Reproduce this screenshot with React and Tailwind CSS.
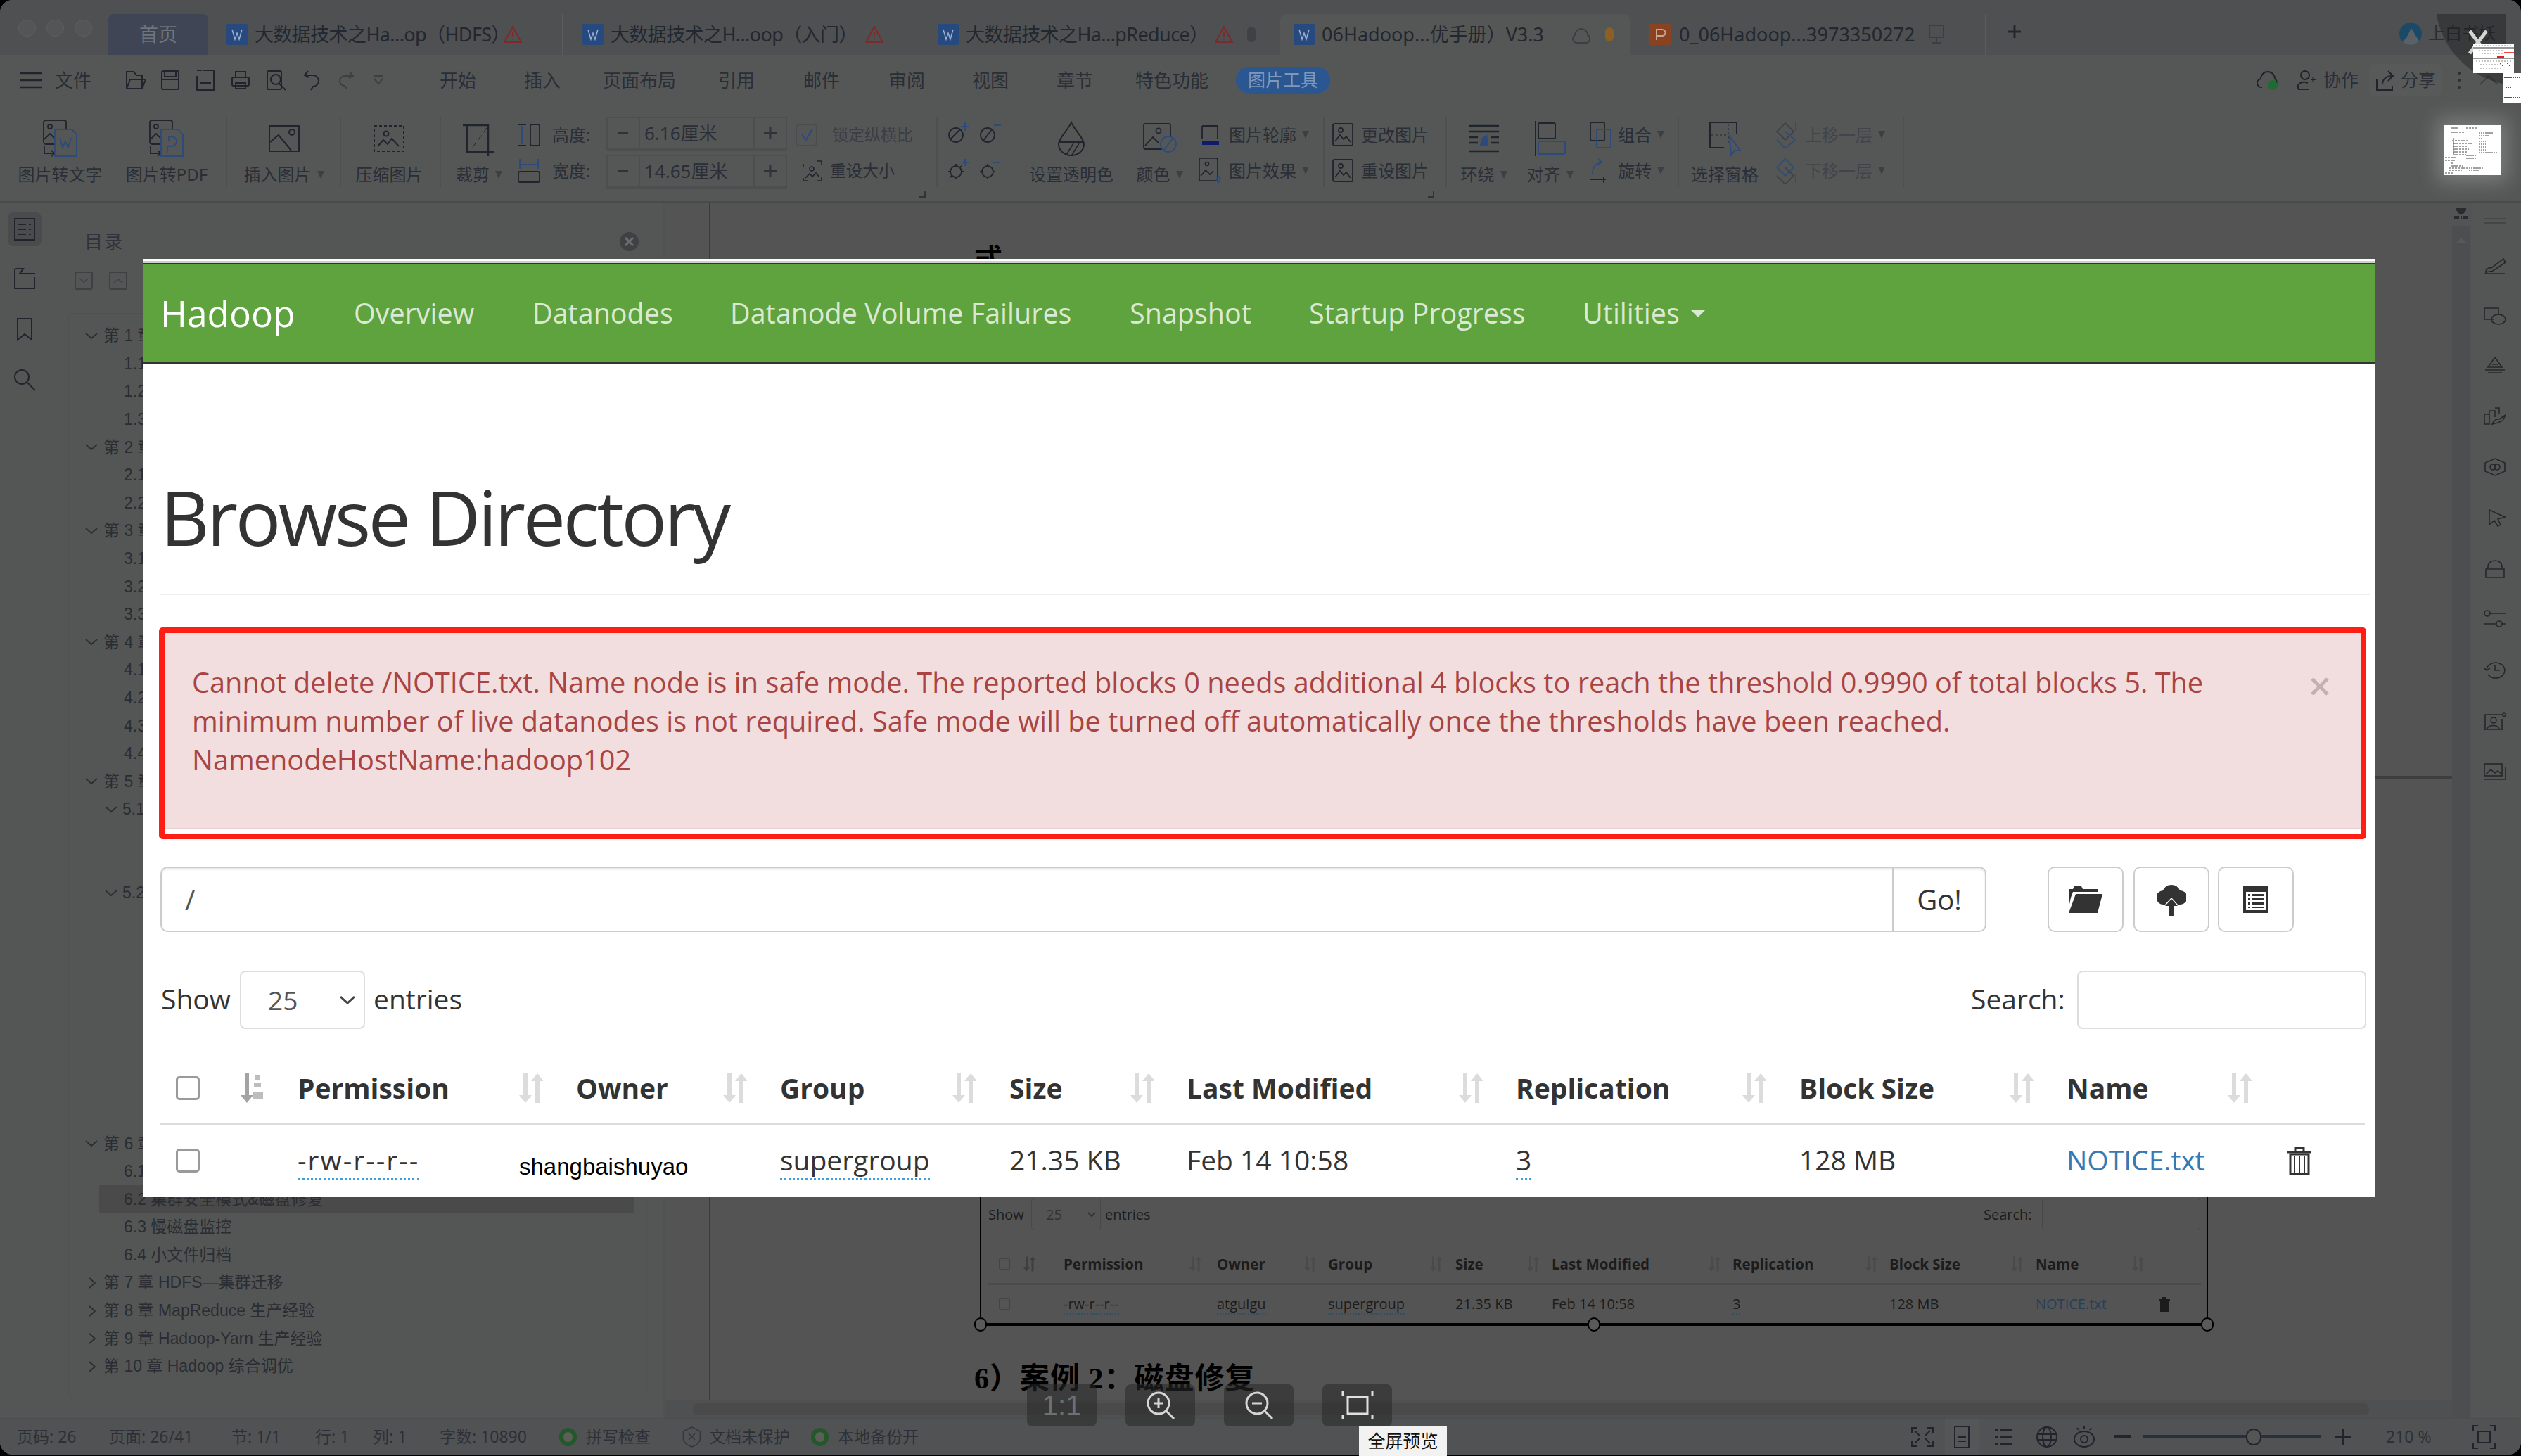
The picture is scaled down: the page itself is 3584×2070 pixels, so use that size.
import React from "react";

const D = "#20242d";
const B = "#2c4a7c";
const Svg = ({ w, h, children, sw = 2, c = D, className = "" }) => (
  <svg width={w} height={h} viewBox={`0 0 ${w} ${h}`} fill="none" stroke={c} strokeWidth={sw} className={`shrink-0 ${className}`}>
    {children}
  </svg>
);
const Arrow = () => <span className="inline-block ml-[8px] w-0 h-0 border-x-[5px] border-x-transparent border-t-[11px] border-t-[#3b3f46]" />;

const Warn = () => (
  <Svg w={26} h={26} c="#7c2b2b">
    <path d="M13 2 L25 24 H1 Z" />
    <path d="M13 9v8M13 19v2" />
  </Svg>
);
const DocIcon = ({ color = "#264a80", letter = "W" }) => (
  <div className="w-[30px] h-[30px] flex items-center justify-center shrink-0 rounded-[2px]" style={{ background: color }}>
    {letter === "W" ? (
      <Svg w={20} h={20} c="#9fb2cc" sw={1.5}><path d="M3 3l4 14 3-9 3 9 4-14" /></Svg>
    ) : (
      <Svg w={20} h={20} c="#c9a793" sw={2}><path d="M5 18V3h8a4 4 0 010 9H5" /></Svg>
    )}
  </div>
);

function Tabs() {
  return (
    <div className="h-[78px] bg-[#4e5052] flex items-end text-[27px] text-[#23272f] shrink-0">
      <div className="flex gap-[15px] ml-[26px] mb-[26px]">
        <i className="w-[25px] h-[24px] rounded-full border border-[#5d5f60] bg-[#535556]" />
        <i className="w-[25px] h-[24px] rounded-full border border-[#5d5f60] bg-[#535556]" />
        <i className="w-[25px] h-[24px] rounded-full border border-[#5d5f60] bg-[#535556]" />
      </div>
      <div className="ml-[23px] w-[142px] h-[58px] bg-[#3f4554] rounded-t-[8px] flex items-center justify-center text-[#71757c]">首页</div>
      <div className="ml-[26px] h-[58px] flex items-center w-[478px] border-r border-[#5a5c5e]">
        <DocIcon /><span className="ml-[10px] w-[354px] whitespace-nowrap tracking-[-0.6px]">大数据技术之Ha...op（HDFS）</span><Warn />
      </div>
      <div className="ml-[28px] h-[58px] flex items-center w-[479px] border-r border-[#5a5c5e]">
        <DocIcon /><span className="ml-[10px] w-[362px] whitespace-nowrap tracking-[-0.6px]">大数据技术之H...oop（入门）</span><Warn />
      </div>
      <div className="ml-[26px] h-[58px] flex items-center w-[487px]">
        <DocIcon /><span className="ml-[10px] w-[354px] whitespace-nowrap tracking-[-0.6px]">大数据技术之Ha...pReduce）</span><Warn />
        <i className="ml-[20px] w-[12px] h-[22px] rounded-full bg-[#3f4145]" />
      </div>
      <div className="h-[58px] w-[497px] bg-[#555756] rounded-t-[8px] flex items-center pl-[19px]">
        <DocIcon /><span className="ml-[10px] w-[355px] whitespace-nowrap">06Hadoop...优手册）V3.3</span>
        <Svg w={28} h={32} c="#3b3e44"><path d="M7 28a6 6 0 01-2-11 9 9 0 0118 0 6 6 0 01-1 11z" /></Svg>
        <i className="ml-[20px] w-[12px] h-[20px] rounded-full bg-[#8c5f22]" />
      </div>
      <div className="ml-[28px] h-[58px] flex items-center w-[478px] border-r border-[#5a5c5e]">
        <DocIcon color="#8a4320" letter="P" /><span className="ml-[12px] w-[354px] whitespace-nowrap">0_06Hadoop...3973350272</span>
        <Svg w={24} h={30} c="#3b3e44"><rect x="2" y="2" width="20" height="17" /><path d="M12 19v7M6 27h12" /></Svg>
      </div>
      <div className="ml-[30px] mb-[22px]"><Svg w={22} h={22} c="#25282e" sw={3}><path d="M11 2v18M2 11h18" /></Svg></div>
      <div className="ml-[536px] mb-[14px] w-[32px] h-[32px] rounded-full overflow-hidden">
        <svg width="32" height="32" viewBox="0 0 32 32"><rect width="32" height="32" fill="#1a4a68" /><path d="M0 32L10 22 17 8 24 20 32 32z" fill="#5b5f66" /></svg>
      </div>
      <span className="ml-[9px] mb-[13px] whitespace-nowrap text-[24px] text-[#2b2e33]">上白书妖</span>
    </div>
  );
}

function Menu() {
  return (
    <div className="h-[72px] flex items-center text-[26px] text-[#2a2e37] bg-[#555756] shrink-0 relative">
      <Svg w={30} h={26} className="ml-[29px]" sw={2.5}><path d="M0 3h30M0 13h30M0 23h30" /></Svg>
      <span className="ml-[19px] w-[52px]">文件</span>
      <Svg w={30} h={30} className="ml-[48px]"><path d="M2 27V3h10l4 5h8v19zM2 27l5-13h22l-5 13" /></Svg>
      <Svg w={28} h={30} className="ml-[20px]"><rect x="2" y="2" width="24" height="26" rx="2" /><path d="M6 2v8h16V2M2 14h24" /></Svg>
      <Svg w={28} h={32} className="ml-[22px]"><path d="M10 2h16v28H2V10" /><path d="M2 2h7M6 20h16" /></Svg>
      <Svg w={28} h={28} className="ml-[22px]"><rect x="2" y="10" width="24" height="12" rx="2" /><rect x="7" y="2" width="14" height="8" /><rect x="7" y="18" width="14" height="8" /></Svg>
      <Svg w={30} h={30} className="ml-[22px]"><rect x="2" y="2" width="20" height="26" rx="2" /><circle cx="14" cy="14" r="7" /><path d="M19 20l9 9" /></Svg>
      <Svg w={26} h={32} className="ml-[22px]"><path d="M8 3L3 9l6 3M3 9h12a8 8 0 010 16l-3 5" /></Svg>
      <Svg w={24} h={30} c="#3c3f44" className="ml-[24px]"><path d="M17 3l5 6-6 3M22 9H10a7 7 0 000 14l3 4" /></Svg>
      <Svg w={16} h={14} c="#3c3f44" className="ml-[26px]"><path d="M2 1h12M2 5l6 7 6-7" /></Svg>
      <span className="ml-[79px] w-[52px]">开始</span>
      <span className="ml-[68px] w-[52px]">插入</span>
      <span className="ml-[60px] w-[104px]">页面布局</span>
      <span className="ml-[60px] w-[52px]">引用</span>
      <span className="ml-[69px] w-[52px]">邮件</span>
      <span className="ml-[69px] w-[52px]">审阅</span>
      <span className="ml-[67px] w-[52px]">视图</span>
      <span className="ml-[68px] w-[52px]">章节</span>
      <span className="ml-[60px] w-[104px]">特色功能</span>
      <span className="ml-[39px] w-[134px] h-[38px] rounded-[19px] bg-[#2a5792] text-[#7f98ba] flex items-center justify-center text-[25px]">图片工具</span>
      <Svg w={32} h={28} className="ml-[1317px]"><path d="M8 24a6 6 0 01-2-12 10 10 0 0120 0 6 6 0 010 10" /><circle cx="23" cy="21" r="7" fill="#1f6b33" stroke="none" /></Svg>
      <Svg w={28} h={30} className="ml-[24px]"><circle cx="13" cy="8" r="6" /><path d="M3 28V22a10 8 0 0114-3M3 28h16M21 14h7M24.500 10v8" /></Svg>
      <span className="ml-[11px] text-[25px]">协作</span>
      <div className="ml-[15px] w-[103px] h-[46px] rounded-[8px] bg-[#585a5a] flex items-center pl-[9px] text-[25px]">
        <Svg w={26} h={32}><path d="M2 14v16h22V24M10 22c0-8 6-12 14-12M18 3l7 7-7 7" /></Svg>
        <span className="ml-[10px]">分享</span>
      </div>
      <div className="ml-[23px] flex flex-col gap-[6px]"><i className="w-[4px] h-[4px] rounded-full bg-[#2a2d33]" /><i className="w-[4px] h-[4px] rounded-full bg-[#2a2d33]" /><i className="w-[4px] h-[4px] rounded-full bg-[#2a2d33]" /></div>
    </div>
  );
}

const Sep = ({ cls }) => <i className={`block w-[2px] h-[100px] bg-[#4d4f50] self-start shrink-0 ${cls}`} />;
const Large = ({ cls, label, arrow, children }) => (
  <div className={`flex flex-col items-center shrink-0 ${cls}`}>
    <div className="h-[62px] flex items-center justify-center">{children}</div>
    <div className="h-[40px] flex items-center whitespace-nowrap">{label}{arrow && <Arrow />}</div>
  </div>
);
const SmallRow = ({ children, cls = "" }) => <div className={`h-[51px] flex items-center whitespace-nowrap ${cls}`}>{children}</div>;
const SmallPic = () => (
  <Svg w={32} h={34} sw={1.8}><rect x="1" y="1" width="28" height="31" rx="2" /><circle cx="12" cy="10" r="3" /><path d="M4 26l7-9 5 6 4-4 6 8" /></Svg>
);
const Spin = ({ text }) => (
  <div className="h-[48px] w-[257px] border-2 border-b-4 border-[#4c4e50] flex items-center text-[26px]">
    <div className="w-[46px] h-full border-r-2 border-[#4c4e50] flex items-center justify-center"><i className="w-[14px] h-[4px] bg-[#2f3238]" /></div>
    <span className="flex-1 pl-[6px]">{text}</span>
    <div className="w-[46px] h-full border-l-2 border-[#4c4e50] flex items-center justify-center"><Svg w={18} h={18} c="#2f3238" sw={3}><path d="M9 0v18M0 9h18" /></Svg></div>
  </div>
);

function Ribbon() {
  return (
    <div className="h-[138px] border-b-2 border-[#484a4b] bg-[#555756] flex items-start pt-[16px] text-[24px] text-[#2a2e37] shrink-0 relative">
      <Large cls="ml-[26px] w-[119px]" label="图片转文字">
        <Svg w={50} h={54} sw={1.8}><rect x="1" y="1" width="32" height="34" rx="3" /><circle cx="10" cy="10" r="3" /><path d="M2 28l8-8 6 6" /><path d="M2 38v10h14M12 44l5 4-5 4" /><path d="M17 14h24l7 7v31H17z" fill="#555756" stroke={B} /><path d="M24 26l4 14 4-9 4 9 4-14" stroke={B} /></Svg>
      </Large>
      <Large cls="ml-[34px] w-[116px]" label="图片转PDF">
        <Svg w={50} h={54} sw={1.8}><rect x="1" y="1" width="32" height="34" rx="3" /><circle cx="10" cy="10" r="3" /><path d="M2 28l8-8 6 6" /><path d="M2 38v10h14M12 44l5 4-5 4" /><path d="M17 14h24l7 7v31H17z" fill="#555756" stroke={B} /><path d="M26 48V38h6a6 6 0 000-14h-4v6" stroke={B} /></Svg>
      </Large>
      <Sep cls="ml-[26px]" />
      <Large cls="ml-[22px] w-[117px]" label="插入图片" arrow>
        <Svg w={44} h={38} sw={2}><rect x="1" y="1" width="42" height="36" /><circle cx="33" cy="10" r="4" /><path d="M2 24l12-10 18 22" /></Svg>
      </Large>
      <Sep cls="ml-[21px]" />
      <Large cls="ml-[22px] w-[93px]" label="压缩图片">
        <Svg w={48} h={42} sw={2}><rect x="2" y="3" width="42" height="36" strokeDasharray="4 3" /><circle cx="19" cy="14" r="3.500" /><path d="M7 32l8-9 6 6 6-8 10 11" /></Svg>
      </Large>
      <Sep cls="ml-[25px]" />
      <Large cls="ml-[19px] w-[70px]" label="裁剪" arrow>
        <Svg w={50} h={50} sw={2.5}><path d="M2 6h36v38M8 6v38h38M38 50V44" /><path d="M36 10L14 40" strokeDasharray="8 5" strokeWidth="1" /></Svg>
      </Large>
      <div className="ml-[20px] w-[107px] shrink-0">
        <SmallRow>
          <Svg w={32} h={34} sw={1.8}><path d="M0 2h12M0 32h12" /><path d="M6 4v26" stroke={B} /><rect x="18" y="2" width="13" height="30" rx="2" /></Svg>
          <span className="ml-[17px]">高度:</span>
        </SmallRow>
        <SmallRow>
          <Svg w={32} h={34} sw={1.8}><path d="M3 0v14M29 0v14M4 8h24" stroke={B} /><rect x="1" y="18" width="30" height="15" rx="2" /></Svg>
          <span className="ml-[17px]">宽度:</span>
        </SmallRow>
      </div>
      <div className="ml-[19px] shrink-0 flex flex-col gap-[6px]"><Spin text="6.16厘米" /><Spin text="14.65厘米" /></div>
      <div className="ml-[12px] w-[198px] shrink-0">
        <SmallRow>
          <div className="w-[31px] h-[32px] rounded-[5px] border-2 border-[#4a4d4f] flex items-center justify-center"><Svg w={20} h={20} c={B}><path d="M3 9l6 8 9-16" /></Svg></div>
          <span className="ml-[21px] text-[23px] text-[#3a3d44]">锁定纵横比</span>
        </SmallRow>
        <SmallRow cls="pl-[9px]">
          <Svg w={30} h={32} sw={1.6}><path d="M2 6v4M22 2h6v6M2 26v4h6M28 24v6h-6" /><circle cx="14" cy="13" r="3" /><path d="M5 26l6-6 4 4 5-5 5 6" /></Svg>
          <span className="ml-[10px] text-[23px]">重设大小</span>
        </SmallRow>
      </div>
      <Sep cls="ml-[2px]" />
      <div className="ml-[14px] w-[90px] h-[102px] shrink-0 grid grid-cols-2 content-start gap-y-[20px] pt-[6px]">
        <Svg w={34} h={32} sw={1.8}><circle cx="12" cy="20" r="10" /><path d="M4 26L18 12" /><path d="M25 2v12M19 8h12" stroke={B} /></Svg>
        <Svg w={34} h={32} sw={1.8}><circle cx="12" cy="20" r="10" /><path d="M6 28L18 12" /><path d="M21 6h10" stroke={B} /></Svg>
        <Svg w={34} h={32} sw={1.8}><circle cx="12" cy="20" r="8" /><path d="M1 20h2M21 20h2M12 9v2M12 29v2M4 28l2-2M18 14l2-2" /><path d="M25 2v10M20 7h10" stroke={B} /></Svg>
        <Svg w={34} h={32} sw={1.8}><circle cx="12" cy="20" r="8" /><path d="M1 20h2M21 20h2M12 9v2M12 29v2" /><path d="M20 7h10" stroke={B} /></Svg>
      </div>
      <Large cls="ml-[27px] w-[118px]" label="设置透明色">
        <Svg w={42} h={50} sw={2}><path d="M21 2C17 12 3 24 3 33a18 16 0 0036 0C39 24 25 12 21 2z" /><path d="M3 30h36" /><path d="M14 48l10-16M22 48l10-16" strokeWidth="1.500" /></Svg>
      </Large>
      <Large cls="ml-[33px] w-[67px]" label="颜色" arrow>
        <Svg w={48} h={44} sw={1.8}><rect x="1" y="1" width="38" height="36" rx="2" /><circle cx="22" cy="11" r="3.500" /><path d="M3 32l11-12 8 8" /><circle cx="36" cy="30" r="11" fill="#555756" stroke={B} /><path d="M30 38l12-16" stroke={B} /></Svg>
      </Large>
      <div className="ml-[22px] w-[167px] shrink-0">
        <SmallRow>
          <Svg w={32} h={30} sw={1.8} className="ml-[1px]"><path d="M4 2h22v18M4 2v18" /><rect x="4" y="23" width="24" height="6" fill="#101a6e" stroke="none" /></Svg>
          <span className="ml-[10px]">图片轮廓</span><Arrow />
        </SmallRow>
        <SmallRow>
          <Svg w={34} h={38} sw={1.6}><rect x="1" y="1" width="26" height="32" rx="2" /><circle cx="12" cy="9" r="2.500" /><path d="M3 26l7-8 6 6 5-5" /><path d="M28 26l3 5-3 5-3-5z" stroke={B} /></Svg>
          <span className="ml-[9px]">图片效果</span><Arrow />
        </SmallRow>
      </div>
      <Sep cls="ml-[10px]" />
      <div className="ml-[11px] w-[134px] shrink-0">
        <SmallRow><SmallPic /><span className="ml-[9px]">更改图片</span></SmallRow>
        <SmallRow><SmallPic /><span className="ml-[9px]">重设图片</span></SmallRow>
      </div>
      <Sep cls="ml-[27px]" />
      <Large cls="ml-[19px] w-[67px]" label="环绕" arrow>
        <Svg w={44} h={40} sw={2.5}><path d="M1 2h42M1 10h42M1 18h12M31 18h12M1 26h12M31 26h12M1 38h42" /><path d="M16 30l2-10 8-6 2 16z" fill={B} stroke="none" /></Svg>
      </Large>
      <Large cls="ml-[27px] w-[67px]" label="对齐" arrow>
        <Svg w={44} h={50} sw={2}><path d="M1 0v50" /><rect x="5" y="3" width="24" height="22" rx="2" /><rect x="5" y="29" width="38" height="18" rx="2" stroke={B} /></Svg>
      </Large>
      <div className="ml-[23px] w-[115px] shrink-0">
        <SmallRow>
          <Svg w={32} h={38} sw={1.8}><rect x="1" y="1" width="20" height="26" rx="2" /><rect x="10" y="11" width="20" height="26" rx="2" stroke={B} /></Svg>
          <span className="ml-[8px]">组合</span><Arrow />
        </SmallRow>
        <SmallRow>
          <Svg w={32} h={36} sw={1.8}><path d="M4 22C4 12 8 8 16 6M12 1l5 5-6 3" stroke={B} /><path d="M1 30h22M20 26v9" /></Svg>
          <span className="ml-[8px]">旋转</span><Arrow />
        </SmallRow>
      </div>
      <Sep cls="ml-[10px]" />
      <Large cls="ml-[17px] w-[96px]" label="选择窗格">
        <Svg w={46} h={50} sw={2}><path d="M22 38H2V2h38v16" /><path d="M28 4v30M4 20h22" strokeWidth="1" strokeDasharray="3 3" /><path d="M30 22l15 20-8 0-5 7z" stroke={B} /></Svg>
      </Large>
      <div className="ml-[24px] w-[168px] shrink-0 text-[#41444a]">
        <SmallRow>
          <Svg w={34} h={38} c="#3f4247" sw={1.8}><path d="M14 2L26 14 14 26 2 14z" /><path d="M14 14l14 12-14 12L2 26" stroke="#324c72" /><path d="M29 1v12" stroke="#324c72" /></Svg>
          <span className="ml-[8px]">上移一层</span><Arrow />
        </SmallRow>
        <SmallRow>
          <Svg w={34} h={38} c="#3f4247" sw={1.8}><path d="M14 2L26 14 14 26 2 14z" stroke="#324c72" /><path d="M14 14l12 12-12 12L2 26" /><path d="M29 24v12" stroke="#324c72" /></Svg>
          <span className="ml-[8px]">下移一层</span><Arrow />
        </SmallRow>
      </div>
      <Sep cls="ml-[13px]" />
      <i className="absolute left-[1307px] top-[122px] w-[9px] h-[9px] border-r-2 border-b-2 border-[#303338]" />
      <i className="absolute left-[2030px] top-[122px] w-[9px] h-[9px] border-r-2 border-b-2 border-[#303338]" />
    </div>
  );
}

const tocRows = [
  ["c", "第 1 章"], ["s", "1.1"], ["s", "1.2"], ["s", "1.3"],
  ["c", "第 2 章"], ["s", "2.1"], ["s", "2.2"],
  ["c", "第 3 章"], ["s", "3.1"], ["s", "3.2"], ["s", "3.3"],
  ["c", "第 4 章"], ["s", "4.1"], ["s", "4.2"], ["s", "4.3"], ["s", "4.4"],
  ["c", "第 5 章"], ["o", "5.1"], ["b", ""], ["b", ""], ["o", "5.2"],
  ["b", ""], ["b", ""], ["b", ""], ["b", ""], ["b", ""], ["b", ""], ["b", ""], ["b", ""],
  ["c", "第 6 章"], ["s", "6.1"], ["a", "6.2 集群安全模式&磁盘修复"], ["s", "6.3 慢磁盘监控"], ["s", "6.4 小文件归档"],
  ["r", "第 7 章 HDFS—集群迁移"], ["r", "第 8 章 MapReduce 生产经验"], ["r", "第 9 章 Hadoop-Yarn 生产经验"], ["r", "第 10 章 Hadoop 综合调优"],
];
const Chev = ({ right }) => (
  <Svg w={18} h={18} sw={1.8} c="#2a2d33">{right ? <path d="M6 2l8 7-8 7" /> : <path d="M1 5l8 7 8-7" />}</Svg>
);
function Toc() {
  return (
    <div className="w-[875px] shrink-0 border-r-2 border-[#505253] bg-[#545655] flex flex-col text-[#2a2d33]">
      <div className="mt-[38px] h-[34px] flex items-center justify-between pl-[50px] pr-[35px]">
        <span className="text-[26px] tracking-[2px] text-[#2f333c]">目录</span>
        <div className="w-[27px] h-[27px] rounded-full bg-[#3f4144] flex items-center justify-center"><Svg w={13} h={13} c="#6c6e70" sw={3}><path d="M1 1l11 11M12 1L1 12" /></Svg></div>
      </div>
      <div className="mt-[26px] ml-[36px] flex gap-[23px]">
        <div className="w-[26px] h-[26px] border-2 border-[#3e4043] rounded-[3px] flex items-center justify-center"><Svg w={14} h={10} c="#3e4043" sw={1.5}><path d="M1 2l6 5 6-5" /></Svg></div>
        <div className="w-[26px] h-[26px] border-2 border-[#3e4043] rounded-[3px] flex items-center justify-center"><Svg w={14} h={10} c="#3e4043" sw={1.5}><path d="M1 8l6-5 6 5" /></Svg></div>
      </div>
      <div className="mt-[33px] ml-[27px] w-[823px] h-[1543px] border border-[#4f5153] rounded-[8px] pt-[12px] text-[23px] leading-none overflow-hidden font-['Liberation_Sans','Noto_Sans_CJK_SC',sans-serif]">
        {tocRows.map(([k, t], i) => (
          <div key={i} className="h-[39.6px] flex items-center whitespace-nowrap">
            {(k === "c" || k === "r") && <div className="pl-[23px] flex items-center">{k === "r" ? <Chev right /> : <Chev />}<span className="ml-[8px]">{t}</span></div>}
            {k === "s" && <span className="pl-[78px]">{t}</span>}
            {k === "o" && <div className="pl-[51px] flex items-center"><Chev /><span className="ml-[7px]">{t}</span></div>}
            {k === "a" && <div className="ml-[43px] w-[761px] h-[40px] bg-[#4a4a4a] flex items-center pl-[35px]">{t}</div>}
          </div>
        ))}
      </div>
    </div>
  );
}

function Rail() {
  return (
    <div className="w-[70px] shrink-0 border-r border-[#505253] bg-[#545655] flex flex-col items-center pt-[14px]">
      <div className="w-[48px] h-[48px] rounded-[8px] bg-[#4a4b4c] flex items-center justify-center">
        <Svg w={30} h={32}><rect x="1" y="1" width="28" height="30" /><path d="M6 9h11M6 16h11M6 23h11M21 9h3M21 16h3M21 23h3" /></Svg>
      </div>
      <Svg w={32} h={32} className="mt-[30px]"><path d="M2 2h12l-5 7h22M2 2v28h28V14" /></Svg>
      <Svg w={24} h={34} className="mt-[39px]"><path d="M2 2h20v30l-10-8-10 8z" /></Svg>
      <Svg w={32} h={32} className="mt-[39px]"><circle cx="12" cy="12" r="10" /><path d="M20 20l11 11" /></Svg>
    </div>
  );
}

function SortIcon({ c = "#dcdcdc", w = 36, h = 42, first }) {
  return (
    <svg width={w} height={h} viewBox="0 0 36 42" className="shrink-0" fill={c}>
      <path d="M8 0h6v31h6L11 42 2 31h6z" fill={first ? "#a3a3a3" : c} />
      {first ? (
        <g fill="#bdbdbd"><rect x="23" y="2" width="6" height="7" /><rect x="21" y="13" width="10" height="7" /><rect x="20" y="26" width="14" height="11" /></g>
      ) : (
        <path d="M25 42V11h-6l9-11 9 11h-6v31z" />
      )}
    </svg>
  );
}

const cols = [
  ["Permission", "w-[396px]", "w-[313px]"],
  ["Owner", "w-[290px]", "w-[207px]"],
  ["Group", "w-[326px]", "w-[243px]"],
  ["Size", "w-[252px]", "w-[170px]"],
  ["Last Modified", "w-[468px]", "w-[385px]"],
  ["Replication", "w-[403px]", "w-[320px]"],
  ["Block Size", "w-[380px]", "w-[297px]"],
  ["Name", "w-[424px]", "w-[227px]"],
];
const Dotted = ({ children, cls = "" }) => <span className={`border-b-[3px] border-dotted border-[#3aa0dd] leading-[1.2] ${cls}`}>{children}</span>;
const DottedDark = ({ children }) => <span className="border-b-2 border-dotted border-[#2c5068] leading-[1.2]">{children}</span>;
const Check = () => <div className="ml-[22px] w-[34px] h-[34px] rounded-[5px] border-[3px] border-[#9a9a9a] bg-white shrink-0" />;

function Modal() {
  return (
    <div className="absolute left-[204px] top-[368px] w-[3172px] h-[1334px] bg-white flex flex-col overflow-hidden font-['Open_Sans',sans-serif] text-[#333] z-10">
      <i className="block h-[3px] bg-white" />
      <i className="block h-[3px] bg-[#cfcfcf]" />
      <i className="block h-[2px] bg-[#333]" />
      <div className="h-[139px] bg-[#5fa33e] flex items-center text-[39.500px] text-[#dbe8d3] whitespace-nowrap">
        <span className="ml-[24px] w-[192px] text-[51.500px] text-white">Hadoop</span>
        <span className="ml-[83px] w-[171px]">Overview</span>
        <span className="ml-[83px] w-[198px]">Datanodes</span>
        <span className="ml-[83px] w-[487px]">Datanode Volume Failures</span>
        <span className="ml-[81px] w-[173px]">Snapshot</span>
        <span className="ml-[82px] w-[308px]">Startup Progress</span>
        <span className="ml-[81px] w-[139px]">Utilities</span>
        <i className="ml-[15px] w-0 h-0 border-x-[10px] border-x-transparent border-t-[10px] border-t-[#dbe8d3]" />
      </div>
      <i className="block h-[2px] bg-[#333]" />
      <i className="block h-[1px] bg-[#ccc]" />
      <h1 className="ml-[24px] mt-[152px] text-[108px] leading-[130px] font-normal whitespace-nowrap tracking-[-3.700px]">Browse Directory</h1>
      <i className="block mt-[44px] ml-[24px] mr-[6px] h-[2px] bg-[#eee]" />
      <div className="relative mt-[46px] ml-[22px] w-[3138px] h-[301px] border-[8px] border-[#ff1e14] rounded-[5px] bg-white">
        <div className="h-[278px] bg-[#f2dede] border-b border-[#ebccd1] pl-[39px] pt-[43px] text-[39.700px] leading-[55px] text-[#a94442] whitespace-nowrap">
          Cannot delete /NOTICE.txt. Name node is in safe mode. The reported blocks 0 needs additional 4 blocks to reach the threshold 0.9990 of total blocks 5. The<br />
          minimum number of live datanodes is not required. Safe mode will be turned off automatically once the thresholds have been reached.<br />
          NamenodeHostName:hadoop102
        </div>
        <Svg w={26} h={26} c="#c4b0b0" sw={5} className="absolute left-[3051px] top-[63px]"><path d="M2 2l22 22M24 2L2 24" /></Svg>
      </div>
      <div className="mt-[39px] ml-[24px] h-[93px] flex">
        <div className="w-[2596px] flex border-2 border-[#ccc] rounded-[10px] overflow-hidden shadow-[inset_0_2px_3px_rgba(0,0,0,0.1)]">
          <div className="flex-1 flex items-center pl-[33px] text-[40px] text-[#555]">/</div>
          <div className="w-[132px] border-l-2 border-[#ccc] flex items-center justify-center text-[40px]">Go!</div>
        </div>
        <div className="ml-[87px] w-[108px] border-2 border-[#ccc] rounded-[10px] flex items-center justify-center">
          <svg width="48" height="38" viewBox="0 0 48 38" fill="#333"><path d="M0 30V4h6l2-4h10l2 4h22v4H6l-3 8z" /><path d="M10 11h38l-7 27H0z" /></svg>
        </div>
        <div className="ml-[14px] w-[108px] border-2 border-[#ccc] rounded-[10px] flex items-center justify-center">
          <svg width="42" height="46" viewBox="0 0 42 46" fill="#333"><path d="M10 30a10 10 0 01-1-20 13 13 0 0124 0 10 10 0 011 20h-4L21 20l-9 10z" /><path d="M21 22l9 10h-6v14h-6V32h-6z" /></svg>
        </div>
        <div className="ml-[12px] w-[108px] border-2 border-[#ccc] rounded-[10px] flex items-center justify-center">
          <svg width="36" height="38" viewBox="0 0 36 38" fill="#333"><path fillRule="evenodd" d="M0 0h36v38H0zM4 8v26h28V8z" /><path d="M7 11h3v3H7zM13 11h16v3H13zM7 17h3v3H7zM13 17h16v3H13zM7 23h3v3H7zM13 23h16v3H13zM7 29h3v2H7zM13 29h16v2H13z" /></svg>
        </div>
      </div>
      <div className="mt-[55px] ml-[25px] h-[83px] flex items-center text-[39px]">
        <span className="w-[112px] mb-[3px]">Show</span>
        <div className="w-[178px] h-full border-2 border-[#ddd] rounded-[8px] flex items-center pl-[38px] text-[#555]">
          <span className="w-[101px] text-[37px]">25</span>
          <Svg w={24} h={14} c="#444" sw={3}><path d="M2 2l10 9 10-9" /></Svg>
        </div>
        <span className="ml-[12px] w-[125px] mb-[3px]">entries</span>
        <span className="ml-[2146px] w-[151px] mb-[3px]">Search:</span>
        <div className="w-[411px] h-full border-2 border-[#ddd] rounded-[8px]" />
      </div>
      <div className="mt-[37px] ml-[24px] h-[97px] pb-[3px] flex items-center text-[39px] font-bold whitespace-nowrap">
        <div className="w-[195px] flex items-center">
          <Check />
          <div className="ml-[56px]"><SortIcon first /></div>
        </div>
        {cols.map(([t, w, o]) => (
          <div key={t} className={`${w} flex items-center`}>
            <span className={o}>{t}</span>
            <SortIcon />
          </div>
        ))}
      </div>
      <i className="block ml-[24px] mr-[14px] h-[3px] bg-[#ddd]" />
      <div className="ml-[24px] h-[102px] pb-[3px] flex items-center text-[39px] whitespace-nowrap">
        <div className="w-[195px]"><Check /></div>
        <div className="w-[396px]"><Dotted cls="tracking-[2px]">-rw-r--r--</Dotted></div>
        <div className="w-[290px]"><span className="-ml-[81px] relative top-[6px] font-['Liberation_Sans',sans-serif] text-[33px] text-black">shangbaishuyao</span></div>
        <div className="w-[326px]"><Dotted>supergroup</Dotted></div>
        <div className="w-[252px]">21.35 KB</div>
        <div className="w-[468px]">Feb 14 10:58</div>
        <div className="w-[403px]"><Dotted>3</Dotted></div>
        <div className="w-[380px]">128 MB</div>
        <div className="w-[313px] text-[#337ab7]">NOTICE.txt</div>
        <svg width="36" height="42" viewBox="0 0 36 42" fill="none" stroke="#333" strokeWidth="3"><path d="M1 9h34M12 8V3h12v5" /><path d="M5 12h26v28H5z" /><path d="M11 14v24M18 14v24M25 14v24" strokeWidth="2" /></svg>
      </div>
    </div>
  );
}

const innerCols = [
  ["Permission", "w-[218px]", "w-[178px]"],
  ["Owner", "w-[158px]", "w-[123px]"],
  ["Group", "w-[181px]", "w-[144px]"],
  ["Size", "w-[137px]", "w-[101px]"],
  ["Last Modified", "w-[257px]", "w-[222px]"],
  ["Replication", "w-[223px]", "w-[188px]"],
  ["Block Size", "w-[208px]", "w-[172px]"],
  ["Name", "w-[180px]", "w-[136px]"],
];
const Handle = ({ cls }) => <i className={`absolute -bottom-[12px] w-[18px] h-[20px] rounded-full border-2 border-black bg-[#5a5a5a] ${cls}`} />;

function DocArea() {
  return (
    <div className="flex-1 min-w-0 flex flex-col bg-[#545454]">
      <div className="flex-1 min-h-0 ml-[63px] border-l-2 border-[#3a3b3c] flex flex-col text-black">
        <div className="mt-[55px] ml-[375px] h-[48px] text-[40px] leading-[48px] font-bold">式</div>
        <i className="block mt-[712px] h-[4px] bg-[#3e3e3e]" />
        <div className="relative mt-[191px] ml-[383px] w-[1746px] h-[587px] border-x-2 border-b-4 border-black flex flex-col justify-end font-['Open_Sans',sans-serif] text-[20px] text-[#1c1c1c]">
          <div className="ml-[10px] flex items-center h-[45px]">
            <span className="w-[61px]">Show</span>
            <div className="w-[99px] h-full border border-[#484848] rounded-[4px] flex items-center pl-[20px] text-[#333]">25<Svg w={12} h={8} c="#333" className="ml-[36px]"><path d="M1 1l5 5 5-5" /></Svg></div>
            <span className="ml-[6px] w-[1249px]">entries</span>
            <span className="w-[83px]">Search:</span>
            <div className="w-[225px] h-full border border-[#484848] rounded-[4px]" />
          </div>
          <div className="mt-[26px] ml-[10px] h-[44px] flex items-center font-bold text-[20.500px] whitespace-nowrap">
            <div className="w-[107px] flex items-center">
              <i className="ml-[15px] w-[16px] h-[16px] rounded-[2px] border border-[#444]" />
              <div className="ml-[18px]"><SortIcon c="#3e3e3e" w={18} h={22} /></div>
            </div>
            {innerCols.map(([t, w, o]) => (
              <div key={t} className={`${w} flex items-center`}><span className={o}>{t}</span><SortIcon c="#4a4a4a" w={18} h={22} /></div>
            ))}
          </div>
          <i className="block ml-[10px] mr-[8px] mt-[5px] h-[3px] bg-[#4a4a4a]" />
          <div className="ml-[10px] h-[54px] flex items-center whitespace-nowrap">
            <div className="w-[107px]"><i className="block ml-[15px] w-[16px] h-[16px] rounded-[2px] border border-[#444]" /></div>
            <div className="w-[218px]"><DottedDark>-rw-r--r--</DottedDark></div>
            <div className="w-[158px]"><DottedDark>atguigu</DottedDark></div>
            <div className="w-[181px]"><DottedDark>supergroup</DottedDark></div>
            <div className="w-[137px]">21.35 KB</div>
            <div className="w-[257px]">Feb 14 10:58</div>
            <div className="w-[223px]"><DottedDark>3</DottedDark></div>
            <div className="w-[208px]">128 MB</div>
            <div className="w-[175px] text-[#24405c]">NOTICE.txt</div>
            <svg width="16" height="22" viewBox="0 0 16 22" fill="#1c1c1c"><path d="M0 4h16v2H0zM5 1h6v3H5zM2 7h12v15H2z" /></svg>
          </div>
          <Handle cls="-left-[10px]" />
          <Handle cls="left-[862px]" />
          <Handle cls="-right-[10px]" />
        </div>
        <div className="mt-[50px] ml-[375px] h-[50px] text-[42px] leading-[50px] font-bold whitespace-nowrap tracking-[1px] font-['Liberation_Serif','Noto_Sans_CJK_SC',serif]">6）案例 2：磁盘修复</div>
      </div>
      <div className="h-[26px] bg-[#4f5051] flex items-center shrink-0">
        <div className="ml-[40px] w-[2383px] h-[17px] bg-[#4a4a4b] rounded-[8px]" />
      </div>
    </div>
  );
}

function VScroll() {
  return (
    <div className="w-[26px] shrink-0 bg-[#4d4e50] flex flex-col items-center">
      <div className="w-full h-[34px] bg-[#535455] flex items-center justify-center">
        <svg width="20" height="18" viewBox="0 0 20 18" fill="#2a2b2d"><path d="M3 0h14v3l-4 5H7L3 3z" /><path d="M0 11h7v5H0zM9 11h2v5H9zM13 11h7v5h-7z" /></svg>
      </div>
      <i className="mt-[16px] w-0 h-0 border-x-[8px] border-x-transparent border-b-[8px] border-b-[#57585a]" />
    </div>
  );
}

function RightPanel() {
  const R = ({ children, mt }) => <Svg w={32} h={26} sw={1.6} c="#25272c" className={mt}>{children}</Svg>;
  return (
    <div className="w-[72px] shrink-0 border-l border-[#505253] bg-[#545655] flex flex-col items-center pt-[21px] pr-[4px]">
      <Svg w={32} h={10} c="#3e4042" sw={1.5}><path d="M0 2h32M0 8h32" /></Svg>
      <R mt="mt-[46px]"><path d="M1 24h29M3 22c0-5 4-7 8-6L28 3l3 5-18 12z" /></R>
      <R mt="mt-[45px]"><path d="M14 18H1V2h20v8" /><ellipse cx="21" cy="18" rx="10" ry="7" /></R>
      <R mt="mt-[45px]"><path d="M16 1L6 15h20zM2 19h28M6 23h20M12 11h8" /></R>
      <R mt="mt-[46px]"><path d="M1 10h7v14H1zM8 24V5h8v9M16 1h6v9M12 24c2-6 8-8 10-7l9-6-4 8-7 3z" /></R>
      <R mt="mt-[46px]"><path d="M16 1l14 6v12l-14 6-14-6V7z" /><circle cx="13" cy="13" r="4" /><circle cx="19" cy="13" r="4" /></R>
      <R mt="mt-[46px]"><path d="M8 2l22 10-10 3 4 8-4 2-5-8-7 6z" /></R>
      <R mt="mt-[47px]"><path d="M6 13V9a10 8 0 0120 0v4M3 13h26v12H3z" /></R>
      <R mt="mt-[45px]"><circle cx="5" cy="5" r="4" /><circle cx="22" cy="20" r="4" /><path d="M9 5h22M1 20h17M26 20h5" /></R>
      <R mt="mt-[46px]"><path d="M4 13a13 11 0 112 7M0 10l4 4 5-3M16 6v8h7" /></R>
      <R mt="mt-[47px]"><path d="M24 4H2v22h24V10" /><circle cx="14" cy="12" r="4" /><path d="M5 24c2-6 15-6 17 0M29 1l3 3-3 3-3-3z" /></R>
      <R mt="mt-[46px]"><rect x="1" y="2" width="25" height="17" /><path d="M1 24h30M31 6v18M3 17l7-7 6 5 4-3 6 5" /></R>
    </div>
  );
}

function Status() {
  return (
    <div className="h-[52px] shrink-0 bg-[#505253] border-t border-[#4c4e4f] flex items-center text-[23px] text-[#2d3038] whitespace-nowrap">
      <span className="ml-[24px] w-[84px]">页码: 26</span>
      <span className="ml-[47px] w-[122px]">页面: 26/41</span>
      <span className="ml-[52px] w-[73px]">节: 1/1</span>
      <span className="ml-[46px] w-[52px]">行: 1</span>
      <span className="ml-[30px] w-[53px]">列: 1</span>
      <span className="ml-[42px] w-[125px]">字数: 10890</span>
      <i className="ml-[45px] w-[25px] h-[26px] rounded-full border-[6px] border-[#24572a] bg-[#5a6058] shrink-0" />
      <span className="ml-[13px] w-[94px]">拼写检查</span>
      <Svg w={27} h={30} className="ml-[43px]" c="#34373c" sw={1.6}><path d="M13.500 1l12 6v10c0 6-6 10-12 12-6-2-12-6-12-12V7z" /><path d="M9 10l9 9M18 10l-9 9" /></Svg>
      <span className="ml-[11px] w-[110px]">文档未保护</span>
      <i className="ml-[35px] w-[25px] h-[26px] rounded-full border-[6px] border-[#24572a] bg-[#5a6058] shrink-0" />
      <span className="ml-[13px] w-[115px]">本地备份开</span>
      <Svg w={34} h={30} className="ml-[1410px]" sw={2}><path d="M2 10V2h8M32 10V2h-8M2 20v8h8M32 20v8h-8M6 6l7 7M28 6l-7 7M6 24l7-7M28 24l-7-7" /></Svg>
      <div className="ml-[15px] w-[48px] h-[50px] bg-[#555657] flex items-center justify-center"><Svg w={22} h={32}><rect x="1" y="1" width="20" height="30" /><path d="M5 16h12M5 22h12" /></Svg></div>
      <Svg w={24} h={28} className="ml-[23px]"><path d="M0 4h4M8 4h16M0 14h4M8 14h16M0 24h4M8 24h16" /></Svg>
      <Svg w={30} h={30} className="ml-[35px]"><circle cx="15" cy="15" r="14" /><ellipse cx="15" cy="15" rx="6" ry="14" /><path d="M1 11h28M1 19h28" /></Svg>
      <Svg w={37} h={34} className="ml-[20px]"><ellipse cx="18" cy="20" rx="14" ry="11" /><circle cx="18" cy="20" r="5" /><path d="M18 1v4M8 4l2 3M28 4l-2 3" /></Svg>
      <i className="ml-[24px] w-[24px] h-[5px] bg-[#22252c] shrink-0" />
      <div className="ml-[16px] relative w-[254px] h-[5px] bg-[#2a2f3d] shrink-0">
        <i className="absolute left-[147px] -top-[9px] w-[22px] h-[24px] rounded-full bg-[#555] border-2 border-[#22252c]" />
      </div>
      <Svg w={22} h={22} className="ml-[20px]" sw={3}><path d="M11 0v22M0 11h22" /></Svg>
      <span className="ml-[50px] w-[78px]">210 %</span>
      <Svg w={33} h={34} className="ml-[45px]"><path d="M8 1H1v7M25 1h7v7M8 33H1v-7M25 33h7v-7" /><rect x="8" y="9" width="17" height="16" /></Svg>
    </div>
  );
}

const Thumb1 = () => (
  <svg width="58" height="42" viewBox="0 0 58 42"><rect width="58" height="42" fill="#fff" /><path d="M0 6h58M0 21h58" stroke="#333" strokeWidth="1" /><path d="M4 3h50M8 10h36M12 14h30M4 25h50M10 30h30M10 35h30" stroke="#888" strokeWidth="1" strokeDasharray="2 2" /><path d="M44 13h14" stroke="#f00" strokeWidth="1.500" /><rect x="34" y="17" width="10" height="3" fill="#d22" /><path d="M38 28l4 4M48 28l4 4" stroke="#d22" /></svg>
);
const Thumb2 = () => (
  <svg width="26" height="42" viewBox="0 0 26 42"><rect width="26" height="42" fill="#fff" /><path d="M2 6h24M4 20h8M2 35h24" stroke="#555" strokeWidth="2" strokeDasharray="2 1" /></svg>
);
const Thumb3 = () => (
  <svg width="82" height="71" viewBox="0 0 82 71"><rect width="82" height="71" fill="#fff" /><path d="M10 4h10M32 4h16M14 18v25M10 10h20M12 22h22M14 26h26M14 30h20M14 34h22M14 38h20M14 42h18M2 46h16M2 50h14M12 52v8M14 58h14M8 61h26M8 64h18M2 68h12" stroke="#444" strokeWidth="1" strokeDasharray="3 1" /><path d="M50 11h20M50 15h14M50 19h6M50 23h10M50 27h10M50 31h10M50 35h10M50 39h26M32 43h16M32 47h16M36 61h20M36 64h14" stroke="#444" strokeWidth="1" strokeDasharray="2 1" /></svg>
);

function Overlays() {
  return (
    <>
      <div className="absolute left-[3462px] top-[20px] w-[100px] h-[100px] overflow-hidden z-20">
        <div className="absolute left-[-0px] top-[-142px] w-[244px] h-[244px] rounded-full bg-[rgba(20,20,20,0.38)]" />
      </div>
      <div className="absolute left-[3508px] top-[42px] z-20">
        <Svg w={30} h={36} c="#d5d5d5" sw={5}><path d="M3 2l24 32M27 2L3 34" /></Svg>
      </div>
      <div className="absolute left-[3516px] top-[62px] z-30"><Thumb1 /></div>
      <div className="absolute left-[3558px] top-[104px] z-30"><Thumb2 /></div>
      <div className="absolute left-[3474px] top-[178px] z-30 shadow-[0_0_26px_10px_rgba(255,255,255,0.22)]"><Thumb3 /></div>
      <Svg w={27} h={14} c="#3f4145" className="absolute left-[3525px] top-[107px] z-10"><path d="M1 13L13 1l13 12" /></Svg>
      <div className="absolute left-[1460px] top-[1968px] flex gap-[41px] z-20">
        <div className="w-[99px] h-[60px] rounded-[8px] bg-[rgba(40,40,40,0.55)] flex items-center justify-center text-[40px] text-[#6d6f70] font-['Liberation_Sans',sans-serif]">1:1</div>
        <div className="w-[99px] h-[60px] rounded-[8px] bg-[rgba(40,40,40,0.55)] flex items-center justify-center">
          <Svg w={42} h={42} c="#d6d6d6" sw={3}><circle cx="18" cy="18" r="15" /><path d="M29 29l11 11M11 18h14M18 11v14" /></Svg>
        </div>
        <div className="w-[99px] h-[60px] rounded-[8px] bg-[rgba(40,40,40,0.55)] flex items-center justify-center">
          <Svg w={42} h={42} c="#d6d6d6" sw={3}><circle cx="18" cy="18" r="15" /><path d="M29 29l11 11M11 18h14" /></Svg>
        </div>
        <div className="w-[99px] h-[60px] rounded-[8px] bg-[rgba(40,40,40,0.55)] flex items-center justify-center">
          <Svg w={46} h={40} c="#e0e0e0" sw={3}><rect x="9" y="8" width="28" height="24" /><path d="M2 6V0M44 6V0M2 34v6M44 34v6" /></Svg>
        </div>
      </div>
      <div className="absolute left-[1932px] top-[2028px] w-[125px] h-[42px] bg-[#f2f2f2] flex items-center justify-center text-[25px] text-[#111] z-20">全屏预览</div>
    </>
  );
}

export default function App() {
  return (
    <div className="relative w-[3584px] h-[2070px] bg-black overflow-hidden font-['Noto_Sans','Noto_Sans_CJK_SC',sans-serif]">
      <div className="w-full h-[2068px] rounded-[18px] overflow-hidden flex flex-col bg-[#555756]">
        <Tabs />
        <Menu />
        <Ribbon />
        <div className="flex-1 min-h-0 flex">
          <Rail />
          <Toc />
          <DocArea />
          <VScroll />
          <RightPanel />
        </div>
        <Status />
      </div>
      <Modal />
      <Overlays />
    </div>
  );
}
